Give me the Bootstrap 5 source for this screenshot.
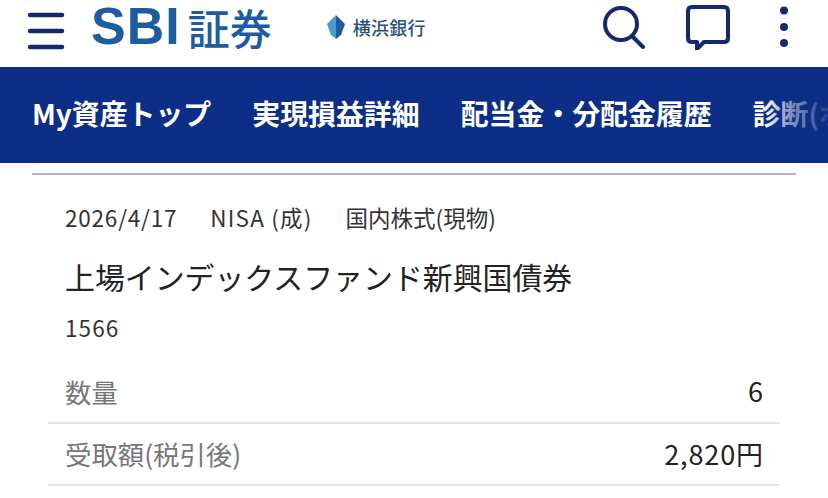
<!DOCTYPE html>
<html lang="ja">
<head>
  <meta charset="UTF-8" />
  <title>SBI証券</title>
  <link href="https://cdn.jsdelivr.net/npm/bootstrap@5.3.3/dist/css/bootstrap.min.css" rel="stylesheet">
  <style>
    body {
      font-family: "Noto Sans CJK JP", "Noto Sans", sans-serif;
      color: #222;
      background: #fff;
      overflow: hidden;
    }
    .top-head { height: 67px; padding: 0 39px 13px 27px; white-space: nowrap; }
    .menu-icon { margin-top: 8px; }
    .logo-sbi {
      font-family: "Liberation Sans", sans-serif;
      font-weight: 700;
      font-size: 52px;
      line-height: 1.15;
      color: #1d5c9e;
      letter-spacing: 1px;
      margin-left: 26px;
    }
    .logo-sho {
      font-size: 42px;
      line-height: 1.45;
      font-weight: 500;
      color: #1d5c9e;
      margin-left: 7px;
    }
    .bank-box { margin-left: 54px; }
    .bank-name { font-size: 18px; font-weight: 500; color: #2e4f78; line-height: 1.45; margin-left: 7px; letter-spacing: .3px; }
    .head-icons { margin-left: auto; }
    .icon-chat { margin-left: 39px; }
    .icon-dots { margin-left: 48px; }
    .tab-bar {
      height: 96px;
      background: #0d2e86;
      padding-left: 32px;
      gap: 41px;
      overflow: hidden;
      position: relative;
    }
    .tab-item {
      color: #fff;
      font-size: 27.9px;
      font-weight: 700;
      white-space: nowrap;
      margin-top: -3px;
    }
    .tab-fade {
      position: absolute;
      top: 0; right: 0; bottom: 0;
      width: 64px;
      background: linear-gradient(to right, rgba(13,46,134,0), rgba(13,46,134,.5) 40%, rgba(13,46,134,.9));
    }
    .top-rule { height: 2px; background: #b4b8be; margin: 10px 32px 0; }
    .item-body { padding: 0 48px; }
    .meta-row { padding: 0 17px; margin-top: 26px; font-size: 22.5px; line-height: 32px; color: #333; gap: 33px; }
    .num-wide { letter-spacing: .8px; }
    .nisa-wide { letter-spacing: 1.2px; }
    .fund-name { padding: 0 17px; margin-top: 21px; font-size: 29.9px; line-height: 44px; color: #222; white-space: nowrap; }
    .fund-code { padding: 0 17px; margin-top: 13px; font-size: 22.5px; line-height: 32px; color: #333; letter-spacing: 1.1px; }
    .val-row {
      height: 62px;
      padding: 0 17px;
      border-bottom: 2px solid #e6e6e6;
      font-size: 26.4px;
    }
    .val-row.first-val { margin-top: 18px; height: 63px; }
    .val-label { color: #777; }
    .val-num { color: #222; font-size: 27px; letter-spacing: .9px; margin-right: -1px; }
  </style>
</head>
<body>

<!-- ヘッダー -->
<div class="top-head d-flex align-items-center">
  <svg class="menu-icon" width="38" height="38" viewBox="0 0 38 38" fill="none" stroke="#15296f" stroke-width="4.5" stroke-linecap="round">
    <path d="M3 3H35M3 19H35M3 35H35"/>
  </svg>
  <span class="logo-sbi">SBI</span>
  <span class="logo-sho">証券</span>
  <div class="bank-box d-flex align-items-center">
    <svg width="20" height="24" viewBox="0 0 20 24">
      <path d="M10 0L1 9L5 20L10 24Z" fill="#4b9ac9"/>
      <path d="M10 0L19 9L15 20L10 24Z" fill="#1d5c9e"/>
    </svg>
    <span class="bank-name">横浜銀行</span>
  </div>
  <div class="head-icons d-flex align-items-center">
    <svg width="44" height="44" viewBox="0 0 44 44" fill="none" stroke="#15296f" stroke-width="4" stroke-linecap="round">
      <circle cx="19" cy="19" r="16"/>
      <path d="M30 31L41 42"/>
    </svg>
    <svg class="icon-chat" width="46" height="46" viewBox="0 0 46 46" fill="none" stroke="#15296f" stroke-width="4" stroke-linejoin="round" stroke-linecap="round">
      <path d="M7 3H39Q43 3 43 7V34Q43 38 39 38H19L12 45V38H7Q3 38 3 34V7Q3 3 7 3Z"/>
    </svg>
    <svg class="icon-dots" width="10" height="42" viewBox="0 0 10 42" fill="#15296f">
      <circle cx="5" cy="4.5" r="4"/><circle cx="5" cy="21" r="4"/><circle cx="5" cy="37" r="4"/>
    </svg>
  </div>
</div>

<!-- タブ -->
<div class="tab-bar d-flex align-items-center">
  <span class="tab-item">My資産トップ</span>
  <span class="tab-item">実現損益詳細</span>
  <span class="tab-item">配当金・分配金履歴</span>
  <span class="tab-item">診断(ポートフォリオ)</span>
  <div class="tab-fade"></div>
</div>

<div class="top-rule"></div>

<div class="item-body">
  <div class="meta-row d-flex">
    <span class="num-wide">2026/4/17</span>
    <span class="nisa-wide">NISA (成)</span>
    <span>国内株式(現物)</span>
  </div>
  <div class="fund-name">上場インデックスファンド新興国債券</div>
  <div class="fund-code">1566</div>
  <div class="val-row first-val d-flex justify-content-between align-items-center">
    <span class="val-label">数量</span>
    <span class="val-num">6</span>
  </div>
  <div class="val-row d-flex justify-content-between align-items-center">
    <span class="val-label">受取額(税引後)</span>
    <span class="val-num">2,820円</span>
  </div>
</div>

</body>
</html>
